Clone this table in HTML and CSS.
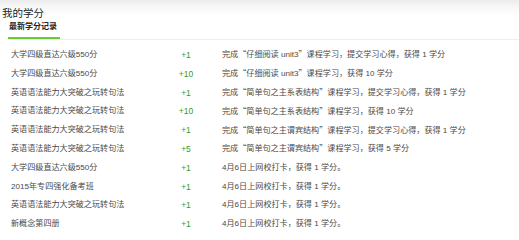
FILE: index.html
```html
<!DOCTYPE html>
<html lang="zh-CN">
<head>
<meta charset="utf-8">
<link rel="stylesheet" href="styles.css">
</head>
<body>
<div class="page">
  <div class="head">
    <h1 class="title">我的学分</h1>
  </div>
  <div class="tabs">
    <span class="tab active">最新学分记录</span>
  </div>
  <ul class="list">
    <li class="row"><span class="name">大学四级直达六级550分</span><span class="pts">+1</span><span class="desc">完成<span class="q">“</span>仔细阅读 unit3<span class="q">”</span>课程学习，提交学习心得，获得 1 学分</span></li>
    <li class="row"><span class="name">大学四级直达六级550分</span><span class="pts">+10</span><span class="desc">完成<span class="q">“</span>仔细阅读 unit3<span class="q">”</span>课程学习，获得 10 学分</span></li>
    <li class="row"><span class="name">英语语法能力大突破之玩转句法</span><span class="pts">+1</span><span class="desc">完成<span class="q">“</span>简单句之主系表结构<span class="q">”</span>课程学习，提交学习心得，获得 1 学分</span></li>
    <li class="row"><span class="name">英语语法能力大突破之玩转句法</span><span class="pts">+10</span><span class="desc">完成<span class="q">“</span>简单句之主系表结构<span class="q">”</span>课程学习，获得 10 学分</span></li>
    <li class="row"><span class="name">英语语法能力大突破之玩转句法</span><span class="pts">+1</span><span class="desc">完成<span class="q">“</span>简单句之主谓宾结构<span class="q">”</span>课程学习，提交学习心得，获得 1 学分</span></li>
    <li class="row"><span class="name">英语语法能力大突破之玩转句法</span><span class="pts">+5</span><span class="desc">完成<span class="q">“</span>简单句之主谓宾结构<span class="q">”</span>课程学习，获得 5 学分</span></li>
    <li class="row"><span class="name">大学四级直达六级550分</span><span class="pts">+1</span><span class="desc">4月6日上网校打卡，获得 1 学分。</span></li>
    <li class="row"><span class="name">2015年专四强化备考班</span><span class="pts">+1</span><span class="desc">4月6日上网校打卡，获得 1 学分。</span></li>
    <li class="row"><span class="name">英语语法能力大突破之玩转句法</span><span class="pts">+1</span><span class="desc">4月6日上网校打卡，获得 1 学分。</span></li>
    <li class="row"><span class="name">新概念第四册</span><span class="pts">+1</span><span class="desc">4月6日上网校打卡，获得 1 学分。</span></li>
  </ul>
</div>
</body>
</html>
```
FILE: styles.css
```css
html, body {
  margin: 0;
  padding: 0;
  background: #fff;
}
.page {
  width: 519px;
  height: 240px;
  overflow: hidden;
  font-family: "Liberation Sans", "Noto Sans CJK SC", sans-serif;
  color: #4a4a4a;
}
.head {
  height: 20px;
  background: linear-gradient(#ececec 0, #f7f7f7 7px, #fff 16px);
  padding: 0 0 0 2px;
}
.title {
  margin: 0;
  padding-top: 6px;
  font-size: 10.5px;
  line-height: 14px;
  font-weight: normal;
  color: #222;
}
.tabs {
  margin-left: 8px;
  border-bottom: 1px solid #eeeeee;
  display: flex;
  height: 19px;
}
.tab {
  display: block;
  width: 52px;
  padding-left: 1px;
  box-sizing: border-box;
  font-size: 8px;
  line-height: 14px;
  font-weight: bold;
  color: #222;
  border-bottom: 2px solid #66cc33;
}
.list {
  list-style: none;
  margin: 0;
  padding: 5.6px 0 0 11px;
}
.row {
  display: grid;
  grid-template-columns: 150px 50px 1fr;
  height: 18.8px;
  align-items: center;
  font-size: 8.1px;
  line-height: 10px;
  white-space: nowrap;
}
.pts {
  text-align: center;
  color: #3a9a1e;
  font-size: 8.5px;
}
.desc {
  padding-left: 11px;
}
.q {
  font-family: "Noto Sans CJK SC", sans-serif;
  font-feature-settings: "fwid" 1;
}
```
